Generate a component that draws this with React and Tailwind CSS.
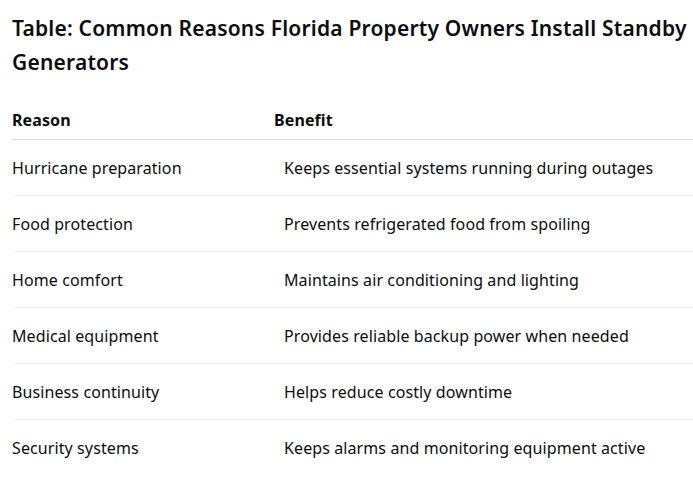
const rows = [
  ["Hurricane preparation", "Keeps essential systems running during outages"],
  ["Food protection", "Prevents refrigerated food from spoiling"],
  ["Home comfort", "Maintains air conditioning and lighting"],
  ["Medical equipment", "Provides reliable backup power when needed"],
  ["Business continuity", "Helps reduce costly downtime"],
  ["Security systems", "Keeps alarms and monitoring equipment active"],
];

export default function App() {
  return (
    <div className="min-h-screen bg-white pl-3 pt-[11px] text-[#0d0d0d] font-['Noto_Sans',sans-serif]">
      <h2 className="text-[21px] font-semibold leading-[34px] tracking-[0.2px]">
        Table: Common Reasons Florida Property Owners Install Standby Generators
      </h2>
      <table className="mt-[29px] w-full border-collapse text-[16px] tracking-[0.1px]">
        <thead>
          <tr className="border-b border-[#dcdcdc]">
            <th className="w-[262px] pb-[7px] text-left font-bold leading-6">Reason</th>
            <th className="pb-[7px] text-left font-bold leading-6">Benefit</th>
          </tr>
        </thead>
        <tbody>
          {rows.map(([reason, benefit], i) => (
            <tr key={reason} className={i < rows.length - 1 ? "border-b border-[#f0f0f0]" : ""}>
              <td className="h-14 align-middle leading-6">{reason}</td>
              <td className="h-14 pl-[10px] align-middle leading-6">{benefit}</td>
            </tr>
          ))}
        </tbody>
      </table>
    </div>
  );
}
